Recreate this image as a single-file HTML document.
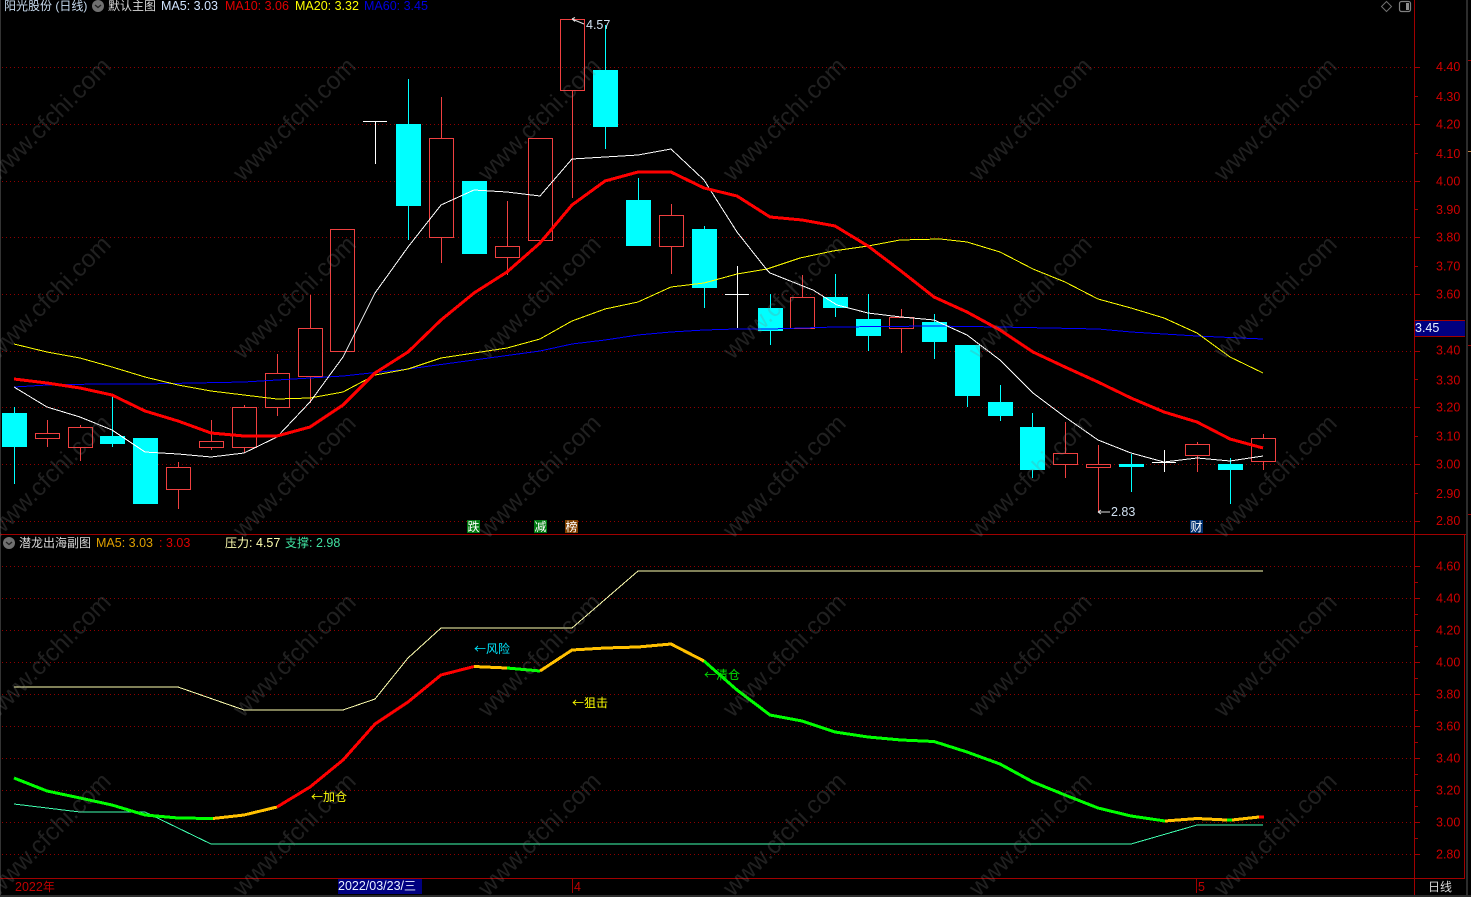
<!DOCTYPE html>
<html><head><meta charset="utf-8"><title>阳光股份</title>
<style>
html,body{margin:0;padding:0;background:#000;width:1471px;height:897px;overflow:hidden}
svg{display:block}
text{font-family:"Liberation Sans","Noto Sans CJK SC",sans-serif;font-size:12.5px;white-space:pre}
.cj{font-size:12px}
.lb{font-family:"Noto Sans CJK SC","Liberation Sans",sans-serif;font-size:12px}
.ax text{fill:#d00000;font-size:12.5px}
.g line{stroke:#900000;stroke-width:1;stroke-dasharray:1 3}
.r rect{fill:none;stroke:#f04040;stroke-width:1}
.r line{stroke:#f04040;stroke-width:1}
.c rect{fill:#00ffff;stroke:none}
.c line{stroke:#00ffff;stroke-width:1}
.w line{stroke:#fff;stroke-width:1}
.l polyline{fill:none;stroke-linejoin:round;shape-rendering:crispEdges}
.wm text{font-size:24.5px;fill:rgba(128,128,128,.25)}
</style></head><body>
<svg width="1471" height="897" viewBox="0 0 1471 897" xmlns="http://www.w3.org/2000/svg">
<rect width="1471" height="897" fill="#000"/>
<!-- frame -->
<g shape-rendering="crispEdges">
<rect x="0" y="0" width="1" height="897" fill="#333"/>
<rect x="1466" y="0" width="2" height="897" fill="#2c2c2c"/>
<rect x="0" y="895" width="1471" height="2" fill="#2c2c2c"/>
<rect x="1414" y="0" width="1" height="895" fill="#a00000"/>
<rect x="0" y="534" width="1466" height="1" fill="#a00000"/>
<rect x="0" y="878" width="1465" height="1" fill="#a00000"/>
<rect x="1464" y="534" width="1" height="345" fill="#a00000"/>
<rect x="1468" y="60" width="3" height="1" fill="#a00000"/>
<rect x="1468" y="151" width="3" height="1" fill="#c08040"/>
<rect x="1468" y="345" width="3" height="1" fill="#a00000"/>
<rect x="1468" y="514" width="3" height="1" fill="#a00000"/>
</g>
<!-- grid -->
<g class="g" shape-rendering="crispEdges">
<line x1="2" x2="1414" y1="67.5" y2="67.5"/><line x1="2" x2="1414" y1="124.5" y2="124.5"/><line x1="2" x2="1414" y1="181.5" y2="181.5"/><line x1="2" x2="1414" y1="237.5" y2="237.5"/><line x1="2" x2="1414" y1="294.5" y2="294.5"/><line x1="2" x2="1414" y1="351.5" y2="351.5"/><line x1="2" x2="1414" y1="407.5" y2="407.5"/><line x1="2" x2="1414" y1="464.5" y2="464.5"/><line x1="2" x2="1414" y1="521.5" y2="521.5"/>
<line x1="2" x2="1414" y1="566.5" y2="566.5"/><line x1="2" x2="1414" y1="598.5" y2="598.5"/><line x1="2" x2="1414" y1="630.5" y2="630.5"/><line x1="2" x2="1414" y1="662.5" y2="662.5"/><line x1="2" x2="1414" y1="694.5" y2="694.5"/><line x1="2" x2="1414" y1="726.5" y2="726.5"/><line x1="2" x2="1414" y1="758.5" y2="758.5"/><line x1="2" x2="1414" y1="790.5" y2="790.5"/><line x1="2" x2="1414" y1="822.5" y2="822.5"/><line x1="2" x2="1414" y1="854.5" y2="854.5"/>
</g>
<!-- axis ticks -->
<g stroke="#a00000" shape-rendering="crispEdges">
<path d="M1415 67.5h5M1415 124.5h5M1415 181.5h5M1415 237.5h5M1415 294.5h5M1415 351.5h5M1415 407.5h5M1415 464.5h5M1415 521.5h5M1415 96.5h3M1415 153.5h3M1415 209.5h3M1415 266.5h3M1415 379.5h3M1415 436.5h3M1415 493.5h3M1415 566.5h5M1415 598.5h5M1415 630.5h5M1415 662.5h5M1415 694.5h5M1415 726.5h5M1415 758.5h5M1415 790.5h5M1415 822.5h5M1415 854.5h5M1415 582.5h3M1415 614.5h3M1415 646.5h3M1415 678.5h3M1415 710.5h3M1415 742.5h3M1415 774.5h3M1415 806.5h3M1415 838.5h3"/>
</g>
<g class="ax">
<text x="1436" y="71">4.40</text><text x="1436" y="101">4.30</text><text x="1436" y="128.500">4.20</text><text x="1436" y="158">4.10</text><text x="1436" y="185.500">4.00</text><text x="1436" y="214">3.90</text><text x="1436" y="241.500">3.80</text><text x="1436" y="270.500">3.70</text><text x="1436" y="298.500">3.60</text><text x="1436" y="354.500">3.40</text><text x="1436" y="384.500">3.30</text><text x="1436" y="411.500">3.20</text><text x="1436" y="440.500">3.10</text><text x="1436" y="468.500">3.00</text><text x="1436" y="498">2.90</text><text x="1436" y="525">2.80</text>
<text x="1436" y="570.500">4.60</text><text x="1436" y="602.500">4.40</text><text x="1436" y="634.500">4.20</text><text x="1436" y="666.500">4.00</text><text x="1436" y="698.500">3.80</text><text x="1436" y="730.500">3.60</text><text x="1436" y="762.500">3.40</text><text x="1436" y="794.500">3.20</text><text x="1436" y="826.500">3.00</text><text x="1436" y="858.500">2.80</text>
</g>
<!-- price tag -->
<g shape-rendering="crispEdges"><rect x="1415" y="320" width="50" height="17" fill="#000080"/><rect x="1415" y="320" width="50" height="1" fill="#a00000"/><rect x="1415" y="336" width="50" height="1" fill="#a00000"/></g>
<text x="1415" y="332" fill="#e8f0ff">3.45</text>
<!-- candles -->
<g shape-rendering="crispEdges">
<g class="c">
<line x1="14.500" x2="14.500" y1="407" y2="484"/><rect x="2" y="413" width="25" height="34"/>
<line x1="112.500" x2="112.500" y1="397" y2="447"/><rect x="100" y="436" width="25" height="8"/>
<rect x="133" y="438" width="25" height="66"/>
<line x1="408.500" x2="408.500" y1="79" y2="240"/><rect x="396" y="124" width="25" height="82"/>
<rect x="462" y="181" width="25" height="73"/>
<line x1="605.500" x2="605.500" y1="25" y2="149"/><rect x="593" y="70" width="25" height="57"/>
<line x1="638.500" x2="638.500" y1="178" y2="246"/><rect x="626" y="200" width="25" height="46"/>
<line x1="704.500" x2="704.500" y1="226" y2="308"/><rect x="692" y="229" width="25" height="59"/>
<line x1="770.500" x2="770.500" y1="294" y2="345"/><rect x="758" y="308" width="25" height="23"/>
<line x1="835.500" x2="835.500" y1="274" y2="317"/><rect x="823" y="297" width="25" height="11"/>
<line x1="868.500" x2="868.500" y1="294" y2="351"/><rect x="856" y="319" width="25" height="17"/>
<line x1="934.500" x2="934.500" y1="314" y2="359"/><rect x="922" y="322" width="25" height="20"/>
<line x1="967.500" x2="967.500" y1="345" y2="407"/><rect x="955" y="345" width="25" height="51"/>
<line x1="1000.500" x2="1000.500" y1="385" y2="421"/><rect x="988" y="402" width="25" height="14"/>
<line x1="1032.500" x2="1032.500" y1="413" y2="478"/><rect x="1020" y="427" width="25" height="43"/>
<line x1="1131.500" x2="1131.500" y1="454" y2="492"/><rect x="1119" y="464" width="25" height="3"/>
<line x1="1230.500" x2="1230.500" y1="458" y2="504"/><rect x="1218" y="464" width="25" height="6"/>
</g>
<g class="r">
<line x1="47.500" x2="47.500" y1="420" y2="433"/><line x1="47.500" x2="47.500" y1="438" y2="447"/><rect x="35.500" y="433.500" width="24" height="5"/>
<line x1="80.500" x2="80.500" y1="425" y2="427"/><line x1="80.500" x2="80.500" y1="447" y2="461"/><rect x="68.500" y="427.500" width="24" height="20"/>
<line x1="178.500" x2="178.500" y1="462" y2="467"/><line x1="178.500" x2="178.500" y1="489" y2="509"/><rect x="166.500" y="467.500" width="24" height="22"/>
<line x1="211.500" x2="211.500" y1="420" y2="441"/><line x1="211.500" x2="211.500" y1="447" y2="450"/><rect x="199.500" y="441.500" width="24" height="6"/>
<line x1="244.500" x2="244.500" y1="405" y2="407"/><line x1="244.500" x2="244.500" y1="447" y2="453"/><rect x="232.500" y="407.500" width="24" height="40"/>
<line x1="277.500" x2="277.500" y1="354" y2="373"/><line x1="277.500" x2="277.500" y1="407" y2="416"/><rect x="265.500" y="373.500" width="24" height="34"/>
<line x1="310.500" x2="310.500" y1="295" y2="328"/><line x1="310.500" x2="310.500" y1="377" y2="403"/><rect x="298.500" y="328.500" width="24" height="48"/>
<rect x="330.500" y="229.500" width="24" height="122"/>
<line x1="441.500" x2="441.500" y1="97" y2="138"/><line x1="441.500" x2="441.500" y1="237" y2="263"/><rect x="429.500" y="138.500" width="24" height="99"/>
<line x1="507.500" x2="507.500" y1="201" y2="246"/><line x1="507.500" x2="507.500" y1="258" y2="275"/><rect x="495.500" y="246.500" width="24" height="11"/>
<rect x="528.500" y="138.500" width="24" height="102"/>
<line x1="572.500" x2="572.500" y1="90" y2="198"/><rect x="560.500" y="19.500" width="24" height="71"/>
<line x1="671.500" x2="671.500" y1="204" y2="215"/><line x1="671.500" x2="671.500" y1="246" y2="274"/><rect x="659.500" y="215.500" width="24" height="31"/>
<line x1="802.500" x2="802.500" y1="275" y2="297"/><rect x="790.500" y="297.500" width="24" height="31"/>
<line x1="901.500" x2="901.500" y1="309" y2="317"/><line x1="901.500" x2="901.500" y1="329" y2="353"/><rect x="889.500" y="317.500" width="24" height="11"/>
<line x1="1065.500" x2="1065.500" y1="422" y2="453"/><line x1="1065.500" x2="1065.500" y1="464" y2="478"/><rect x="1053.500" y="453.500" width="24" height="11"/>
<line x1="1098.500" x2="1098.500" y1="445" y2="464"/><line x1="1098.500" x2="1098.500" y1="467" y2="512"/><rect x="1086.500" y="464.500" width="24" height="3"/>
<line x1="1197.500" x2="1197.500" y1="442" y2="444"/><line x1="1197.500" x2="1197.500" y1="455" y2="472"/><rect x="1185.500" y="444.500" width="24" height="11"/>
<line x1="1263.500" x2="1263.500" y1="434" y2="438"/><line x1="1263.500" x2="1263.500" y1="461" y2="470"/><rect x="1251.500" y="438.500" width="24" height="23"/>
</g>
<g class="w">
<line x1="363" x2="387" y1="121.500" y2="121.500"/><line x1="375.500" x2="375.500" y1="121" y2="164"/>
<line x1="725" x2="749" y1="294.500" y2="294.500"/><line x1="737.500" x2="737.500" y1="266" y2="328"/>
<line x1="1152" x2="1176" y1="462.500" y2="462.500"/><line x1="1164.500" x2="1164.500" y1="450" y2="472"/>
</g>
</g>
<!-- MA lines -->
<g class="l">
<polyline stroke="#0000ff" stroke-width="1" points="14,387 47,385 97,384 145,384 244,382 310,378 343,376 408,369 474,360 540,351 572,344 605,340 638,335 671,332 704,330 737,329 770,329 835,327 934,326 1000,327 1098,329 1131,332 1164,334 1197,336 1263,339"/>
<polyline stroke="#ffff00" stroke-width="1" points="14,344 47,352 80,358 112,367 145,377 178,385 211,391 244,395 277,399 310,398 343,392 375,375 408,369 441,358 474,353 507,348 540,339 572,321 605,309 638,302 671,287 704,283 737,274 767,269 800,258 833,251 868,246 900,240 940,239 967,242 1000,252 1033,269 1065,282 1098,299 1131,308 1164,318 1197,333 1230,357 1263,373"/>
<polyline stroke="#ffffff" stroke-width="1" points="14,387 47,407 80,417 112,430 145,452 178,454 211,457 244,453 277,437 310,402 343,357 375,293 408,247 441,205 474,190 507,192 540,196 572,159 605,157 638,155 671,149 704,180 737,232 767,270 770,273 813,290 837,305 868,313 901,317 934,320 967,335 1000,360 1033,393 1065,417 1098,440 1131,453 1164,462 1197,458 1230,461 1263,456"/>
<polyline stroke="#ff0000" stroke-width="3" points="14,379 47,383 80,388 112,395 145,411 178,421 211,433 244,436 277,436 310,427 343,405 375,373 408,352 441,320 474,293 507,272 540,243 572,205 605,181 638,172 671,172 704,188 737,196 770,217 802,220 835,226 868,246 901,271 934,297 967,312 1000,330 1033,352 1065,367 1098,382 1131,398 1164,412 1197,422 1230,439 1263,448"/>
</g>
<!-- main labels -->
<path d="M572 19L584 24M572 19l3-1.500M572 19l3 2.500" stroke="#e0e0e0" fill="none"/>
<text x="586" y="29" fill="#d0e0f0">4.57</text>
<path d="M1098 512H1110M1098 512l3-2M1098 512l3 2" stroke="#e0e0e0" fill="none"/>
<text x="1111" y="516" fill="#d0e0f0">2.83</text>
<g shape-rendering="crispEdges">
<rect x="467" y="520" width="13" height="13" fill="#007a10"/><rect x="534" y="520" width="13" height="13" fill="#007a10"/><rect x="565" y="520" width="13" height="13" fill="#804000"/><rect x="1190" y="520" width="13" height="13" fill="#003070"/>
</g>
<g fill="#fff"><text class="cj" x="467.500" y="531">跌</text><text class="cj" x="534.500" y="531">减</text><text class="cj" x="565.500" y="531">榜</text><text class="cj" x="1190.500" y="531">财</text></g>
<!-- sub chart lines -->
<g class="l">
<polyline stroke="#ffffb0" stroke-width="1" points="14,687 178,687 244,710 343,710 375,699 408,658 441,628 572,628 638,571 1263,571"/>
<polyline stroke="#40ffb0" stroke-width="1" points="14,804 80,812 145,812 211,844 1131,844 1197,825 1263,825"/>
<polyline stroke="#00ff00" stroke-width="3" points="14,778 47,791 80,798 112,805 145,815 178,818 213,818.500"/>
<polyline stroke="#ffc000" stroke-width="3" points="213,818.500 244,815 277,807"/>
<polyline stroke="#ff0000" stroke-width="3" points="277,807 310,787 343,760 375,724 408,702 441,675 474,666.500"/>
<polyline stroke="#ffc000" stroke-width="3" points="474,666.500 507,668"/>
<polyline stroke="#00ff00" stroke-width="3" points="507,668 540,671"/>
<polyline stroke="#ffc000" stroke-width="3" points="540,671 572,650 605,648 638,647 671,644 704,661"/>
<polyline stroke="#00ff00" stroke-width="3" points="704,661 737,690 770,715 802,721 835,732 868,737 901,740 934,741.500 967,752 1000,764 1033,782 1065,795 1098,808 1131,816 1165,821"/>
<polyline stroke="#ffc000" stroke-width="3" points="1165,821 1197,818.500 1227,820"/>
<polyline stroke="#00ff00" stroke-width="3" points="1227,820 1232,820"/>
<polyline stroke="#ffc000" stroke-width="3" points="1232,820 1259,817"/>
<polyline stroke="#ff0000" stroke-width="3" points="1259,817 1264,817"/>
</g>
<text class="lb" x="474" y="653" fill="#00e8ff">←风险</text>
<text class="lb" x="572" y="707" fill="#ffff00">←狙击</text>
<text class="lb" x="311" y="801" fill="#ffff00">←加仓</text>
<text class="lb" x="704" y="679" fill="#00e000">←清仓</text>
<!-- watermark -->
<g class="wm">
<text text-anchor="middle" transform="translate(55,125) rotate(-45)">www.cfchi.com</text><text text-anchor="middle" transform="translate(300,125) rotate(-45)">www.cfchi.com</text><text text-anchor="middle" transform="translate(545,125) rotate(-45)">www.cfchi.com</text><text text-anchor="middle" transform="translate(790,125) rotate(-45)">www.cfchi.com</text><text text-anchor="middle" transform="translate(1036,125) rotate(-45)">www.cfchi.com</text><text text-anchor="middle" transform="translate(1281,125) rotate(-45)">www.cfchi.com</text>
<text text-anchor="middle" transform="translate(55,303) rotate(-45)">www.cfchi.com</text><text text-anchor="middle" transform="translate(300,303) rotate(-45)">www.cfchi.com</text><text text-anchor="middle" transform="translate(545,303) rotate(-45)">www.cfchi.com</text><text text-anchor="middle" transform="translate(790,303) rotate(-45)">www.cfchi.com</text><text text-anchor="middle" transform="translate(1036,303) rotate(-45)">www.cfchi.com</text><text text-anchor="middle" transform="translate(1281,303) rotate(-45)">www.cfchi.com</text>
<text text-anchor="middle" transform="translate(55,482) rotate(-45)">www.cfchi.com</text><text text-anchor="middle" transform="translate(300,482) rotate(-45)">www.cfchi.com</text><text text-anchor="middle" transform="translate(545,482) rotate(-45)">www.cfchi.com</text><text text-anchor="middle" transform="translate(790,482) rotate(-45)">www.cfchi.com</text><text text-anchor="middle" transform="translate(1036,482) rotate(-45)">www.cfchi.com</text><text text-anchor="middle" transform="translate(1281,482) rotate(-45)">www.cfchi.com</text>
<text text-anchor="middle" transform="translate(55,661) rotate(-45)">www.cfchi.com</text><text text-anchor="middle" transform="translate(300,661) rotate(-45)">www.cfchi.com</text><text text-anchor="middle" transform="translate(545,661) rotate(-45)">www.cfchi.com</text><text text-anchor="middle" transform="translate(790,661) rotate(-45)">www.cfchi.com</text><text text-anchor="middle" transform="translate(1036,661) rotate(-45)">www.cfchi.com</text><text text-anchor="middle" transform="translate(1281,661) rotate(-45)">www.cfchi.com</text>
<text text-anchor="middle" transform="translate(55,840) rotate(-45)">www.cfchi.com</text><text text-anchor="middle" transform="translate(300,840) rotate(-45)">www.cfchi.com</text><text text-anchor="middle" transform="translate(545,840) rotate(-45)">www.cfchi.com</text><text text-anchor="middle" transform="translate(790,840) rotate(-45)">www.cfchi.com</text><text text-anchor="middle" transform="translate(1036,840) rotate(-45)">www.cfchi.com</text><text text-anchor="middle" transform="translate(1281,840) rotate(-45)">www.cfchi.com</text>
</g>
<!-- header main -->
<text class="cj" x="4" y="10" fill="#c8dcf0">阳光股份 (日线)</text>
<circle cx="98" cy="6" r="6" fill="#707070"/><path d="M95 5l3 2.500 3-2.500" stroke="#222" stroke-width="1.300" fill="none"/>
<text class="cj" x="108" y="10" fill="#d8d8d8">默认主图</text>
<text x="161" y="10" fill="#d0e4ff">MA5: 3.03</text>
<text x="225" y="10" fill="#e00000">MA10: 3.06</text>
<text x="295" y="10" fill="#ffff00">MA20: 3.32</text>
<text x="364" y="10" fill="#0000e0">MA60: 3.45</text>
<path d="M1386.500 1.500l5 5-5 5-5-5z" fill="none" stroke="#707070"/>
<rect x="1399.500" y="1.500" width="11" height="10" rx="2" fill="none" stroke="#808080" stroke-width="1.200"/><rect x="1406" y="3" width="3" height="7" fill="#909090"/>
<!-- header sub -->
<circle cx="9" cy="543" r="6" fill="#707070"/><path d="M6 542l3 2.500 3-2.500" stroke="#222" stroke-width="1.300" fill="none"/>
<text class="cj" x="19" y="547" fill="#d8d8d8">潜龙出海副图</text>
<text x="96" y="547" fill="#e0a000">MA5: 3.03</text>
<text x="159" y="547" fill="#e00000">:</text>
<text x="166" y="547" fill="#e00000">3.03</text>
<text x="225" y="547" fill="#ffffb0"><tspan class="cj">压力</tspan>: 4.57</text>
<text x="285" y="547" fill="#40e0a0"><tspan class="cj">支撑</tspan>: 2.98</text>
<!-- bottom bar -->
<text x="15" y="891" fill="#c00000">2022<tspan class="cj">年</tspan></text>
<rect x="338" y="879" width="84" height="15" fill="#000080" shape-rendering="crispEdges"/>
<text x="338" y="890" fill="#e8f0ff">2022/03/23/<tspan class="cj">三</tspan></text>
<g shape-rendering="crispEdges"><rect x="572" y="879" width="1" height="14" fill="#a00000"/><rect x="1196" y="879" width="1" height="14" fill="#a00000"/></g>
<text x="574" y="891" fill="#c00000">4</text>
<text x="1198" y="891" fill="#c00000">5</text>
<text class="cj" x="1428" y="891" fill="#d8d8d8">日线</text>
</svg>
</body></html>
